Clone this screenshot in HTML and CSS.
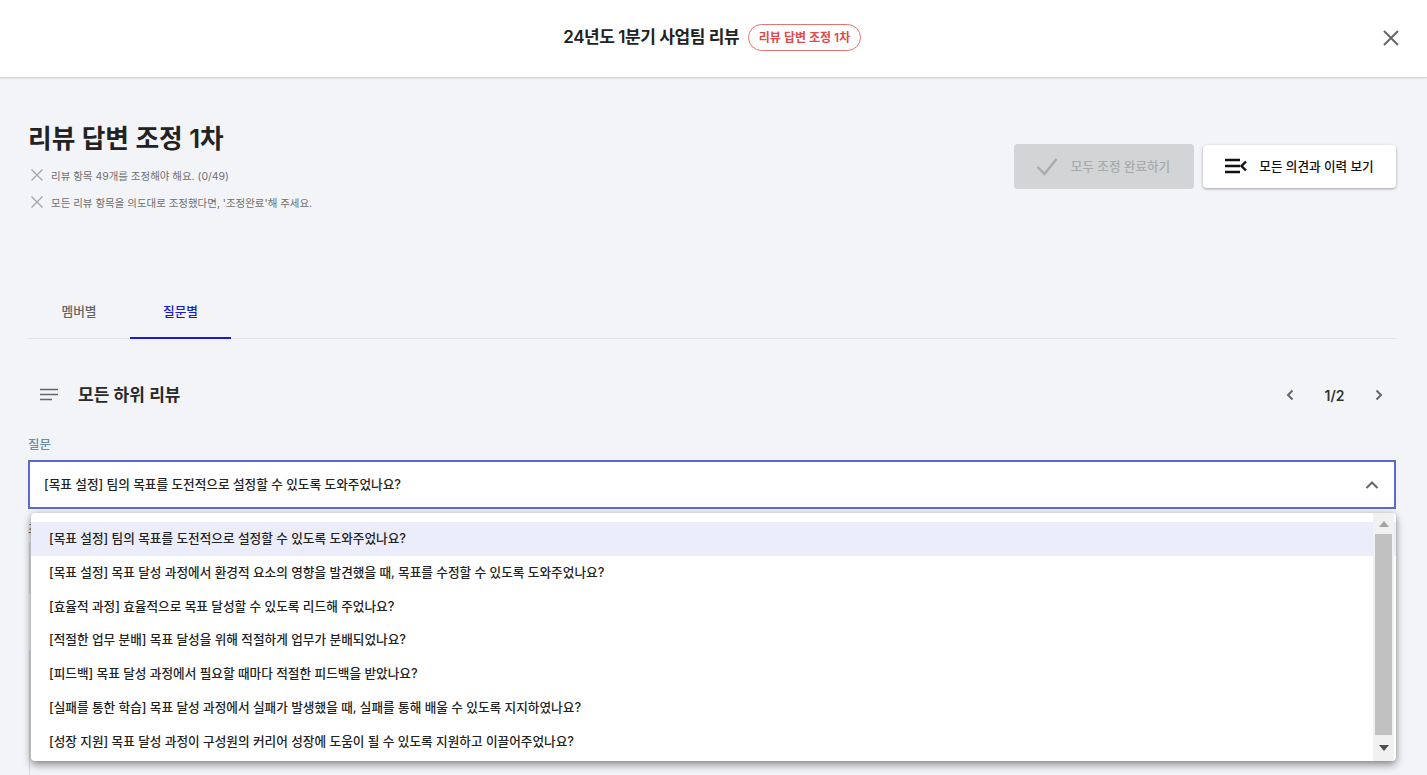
FILE: index.html
```html
<!DOCTYPE html>
<html lang="ko">
<head>
<meta charset="utf-8">
<title>24년도 1분기 사업팀 리뷰</title>
<link rel="stylesheet" href="styles.css">
</head>
<body>
<header class="topbar">
  <h1 class="topbar-title">24년도 1분기 사업팀 리뷰</h1>
  <span class="badge">리뷰 답변 조정 1차</span>
  <button class="close" aria-label="닫기">
    <svg width="24" height="24" viewBox="0 0 24 24"><path d="M5 5l14 14M19 5L5 19" fill="none" stroke="#666" stroke-width="2"/></svg>
  </button>
</header>
<main class="main">
  <section class="intro">
    <div class="intro-text">
      <h2 class="page-title">리뷰 답변 조정 1차</h2>
      <p class="note"><svg width="14" height="14" viewBox="0 0 14 14"><path d="M1.500 1.500l11 11M12.500 1.500l-11 11" fill="none" stroke="#a6a6a6" stroke-width="1.300"/></svg>리뷰 항목 49개를 조정해야 해요. (0/49)</p>
      <p class="note"><svg width="14" height="14" viewBox="0 0 14 14"><path d="M1.500 1.500l11 11M12.500 1.500l-11 11" fill="none" stroke="#a6a6a6" stroke-width="1.300"/></svg>모든 리뷰 항목을 의도대로 조정했다면, '조정완료'해 주세요.</p>
    </div>
    <div class="actions">
      <button class="btn btn-disabled"><svg width="24" height="24" viewBox="0 0 24 24"><path d="M2.500 13l7 7L21.500 5" fill="none" stroke="#a8aaac" stroke-width="2.400"/></svg>모두 조정 완료하기</button>
      <button class="btn btn-white"><svg width="22" height="16" viewBox="0 0 22 16"><path d="M0 2h15M0 8h15M0 14h15" fill="none" stroke="#111" stroke-width="2.400"/><path d="M21 3.500L16.500 8l4.500 4.500" fill="none" stroke="#111" stroke-width="2.400"/></svg>모든 의견과 이력 보기</button>
    </div>
  </section>
  <nav class="tabs">
    <a class="tab">멤버별</a>
    <a class="tab tab-active">질문별</a>
  </nav>
  <section class="subhead">
    <svg width="24" height="24" viewBox="0 0 24 24"><path d="M3 6.500h18M3 11.500h18M3 16.500h12" fill="none" stroke="#666" stroke-width="1.600"/></svg>
    <h3 class="subhead-title">모든 하위 리뷰</h3>
    <div class="pager">
      <svg width="24" height="24" viewBox="0 0 24 24"><path d="M14.500 7.500L10 12l4.500 4.500" fill="none" stroke="#666" stroke-width="2"/></svg>
      <span class="pager-num">1/2</span>
      <svg width="24" height="24" viewBox="0 0 24 24"><path d="M9.500 7.500L14 12l-4.500 4.500" fill="none" stroke="#666" stroke-width="2"/></svg>
    </div>
  </section>
  <label class="field-label">질문</label>
  <div class="select-wrap">
    <div class="select">
      <span>[목표 설정] 팀의 목표를 도전적으로 설정할 수 있도록 도와주었나요?</span>
      <svg width="24" height="24" viewBox="0 0 24 24"><path d="M6.500 15L12 9.500l5.500 5.500" fill="none" stroke="#666" stroke-width="2"/></svg>
    </div>
    <div class="menu">
      <ul class="options">
        <li class="option option-active">[목표 설정] 팀의 목표를 도전적으로 설정할 수 있도록 도와주었나요?</li>
        <li class="option">[목표 설정] 목표 달성 과정에서 환경적 요소의 영향을 발견했을 때, 목표를 수정할 수 있도록 도와주었나요?</li>
        <li class="option">[효율적 과정] 효율적으로 목표 달성할 수 있도록 리드해 주었나요?</li>
        <li class="option">[적절한 업무 분배] 목표 달성을 위해 적절하게 업무가 분배되었나요?</li>
        <li class="option">[피드백] 목표 달성 과정에서 필요할 때마다 적절한 피드백을 받았나요?</li>
        <li class="option">[실패를 통한 학습] 목표 달성 과정에서 실패가 발생했을 때, 실패를 통해 배울 수 있도록 지지하였나요?</li>
        <li class="option">[성장 지원] 목표 달성 과정이 구성원의 커리어 성장에 도움이 될 수 있도록 지원하고 이끌어주었나요?</li>
      </ul>
      <div class="scrollbar">
        <span class="arrow arrow-up"></span>
        <span class="thumb"></span>
        <span class="arrow arrow-down"></span>
      </div>
    </div>
  </div>
  <p class="behind-label">조정</p>
  <div class="behind-box"></div>
  <div class="behind-box behind-box-last"></div>
</main>
</body>
</html>
```
FILE: styles.css
```css
* { box-sizing: border-box; }
html, body { margin: 0; height: 775px; overflow: hidden; }
body {
  background: #f2f4f7;
  color: #222;
  font-family: "Inter", "Noto Sans CJK KR", sans-serif;
}
h1, h2, h3, p, ul { margin: 0; padding: 0; }
button { font-family: inherit; border: 0; cursor: pointer; }

.topbar {
  position: relative;
  height: 78px;
  background: #fff;
  border-bottom: 1px solid #d4d4d4;
  box-shadow: 0 1px 2px rgba(0,0,0,.08);
  display: flex;
  align-items: center;
  justify-content: center;
  gap: 9px;
  padding: 0 3px 3px 0;
}
.topbar-title { font-size: 17px; font-weight: 600; line-height: 26px; letter-spacing: -.43px; color: #222; }
.badge {
  height: 27px;
  padding: 0 9.500px;
  border: 1px solid #e57373;
  border-radius: 14px;
  background: #fff;
  color: #e04a4a;
  font-size: 12px;
  font-weight: 600;
  line-height: 25px;
}
.close {
  position: absolute;
  right: 24px;
  top: 26px;
  width: 24px;
  height: 24px;
  padding: 0;
  background: none;
}

.main { padding: 0 31px 0 28px; }

.intro {
  display: flex;
  justify-content: space-between;
  height: 214px;
  padding-top: 42px;
}
.page-title { font-size: 25.700px; font-weight: 600; line-height: 38px; color: #222; margin-bottom: 4px; }
.note {
  display: flex;
  align-items: center;
  gap: 7px;
  padding-left: 2px;
  height: 26px;
  margin-bottom: 1px;
  font-size: 10.470px;
  color: #6f6f6f;
}
.actions { display: flex; gap: 9px; padding-top: 24px; }
.btn {
  height: 45px;
  display: flex;
  align-items: center;
  justify-content: center;
  border-radius: 4px;
  padding: 0 0 2px;
  font-size: 12.600px;
  font-weight: 500;
}
.btn-disabled { width: 180px; background: #d2d4d6; color: #a8aaac; gap: 12px; padding-right: 3px; }
.btn-white {
  width: 193px;
  height: 43px;
  margin-top: 1px;
  background: #fff;
  color: #111;
  gap: 12px;
  box-shadow: 0 1px 3px rgba(0,0,0,.35);
}

.tabs { display: flex; border-bottom: 1px solid #e2e4e8; height: 47px; }
.tab {
  width: 102px;
  height: 47px;
  line-height: 40px;
  text-align: center;
  font-size: 12.700px;
  font-weight: 500;
  color: #666;
}
.tab-active { width: 101px; color: #1a1ad6; border-bottom: 2px solid #1a1ad6; }

.subhead {
  display: flex;
  align-items: center;
  height: 24px;
  margin-top: 44px;
  padding-left: 9px;
}
.subhead-title { font-size: 17px; font-weight: 600; margin-left: 17px; color: #2a2a2a; line-height: 24px; }
.pager { margin-left: auto; display: flex; align-items: center; gap: 22.500px; padding-right: 5px; }
.pager-num { width: 20px; font-size: 14px; font-weight: 600; color: #333; text-align: center; }

.field-label { display: block; margin-top: 29px; font-size: 12.500px; font-weight: 500; line-height: 18px; color: #6a8caa; }

.select-wrap { position: relative; margin-top: 6px; }
.select {
  height: 49px;
  padding: 0 10px 0 14px;
  display: flex;
  align-items: center;
  justify-content: space-between;
  background: #fff;
  border: 2px solid #5a68d8;
  font-size: 12.650px;
  font-weight: 500;
  color: #222;
}
.select span { margin-bottom: 2px; }
.menu {
  position: absolute;
  z-index: 1;
  left: 3px;
  top: 53px;
  width: 1365px;
  height: 248px;
  padding-top: 9px;
  background: #fff;
  border-radius: 4px;
  box-shadow: 0 4px 8px rgba(0,0,0,.4), 0 0 4px rgba(0,0,0,.15);
  overflow: hidden;
  display: flex;
}
.options { flex: 1; list-style: none; }
.option {
  height: 33.830px;
  padding-left: 18px;
  font-size: 12.650px;
  font-weight: 500;
  line-height: 33.830px;
  color: #222;
  white-space: nowrap;
}
.option-active { background: #ecedfb; }
.scrollbar {
  position: absolute;
  right: 2px;
  top: 0;
  bottom: 0;
  width: 21px;
  background: #f1f1f1;
  display: flex;
  flex-direction: column;
  align-items: center;
}
.arrow { width: 0; height: 0; border-left: 5px solid transparent; border-right: 5px solid transparent; }
.arrow-up { margin-top: 8px; border-bottom: 6px solid #a3a3a3; }
.arrow-down { margin-top: 10px; border-top: 6px solid #505050; }
.thumb { margin-top: 7px; width: 17px; height: 201px; background: #c1c1c1; }

.behind-label { margin-top: 12px; height: 18px; font-size: 12.500px; line-height: 18px; color: #555; }
.behind-box { margin-top: 4px; margin-left: 1px; height: 50px; border-left: 1px solid #d8dade; }
.behind-box-last { margin-top: 57px; height: 125px; border-left: 1px solid #d8dade; }
```
